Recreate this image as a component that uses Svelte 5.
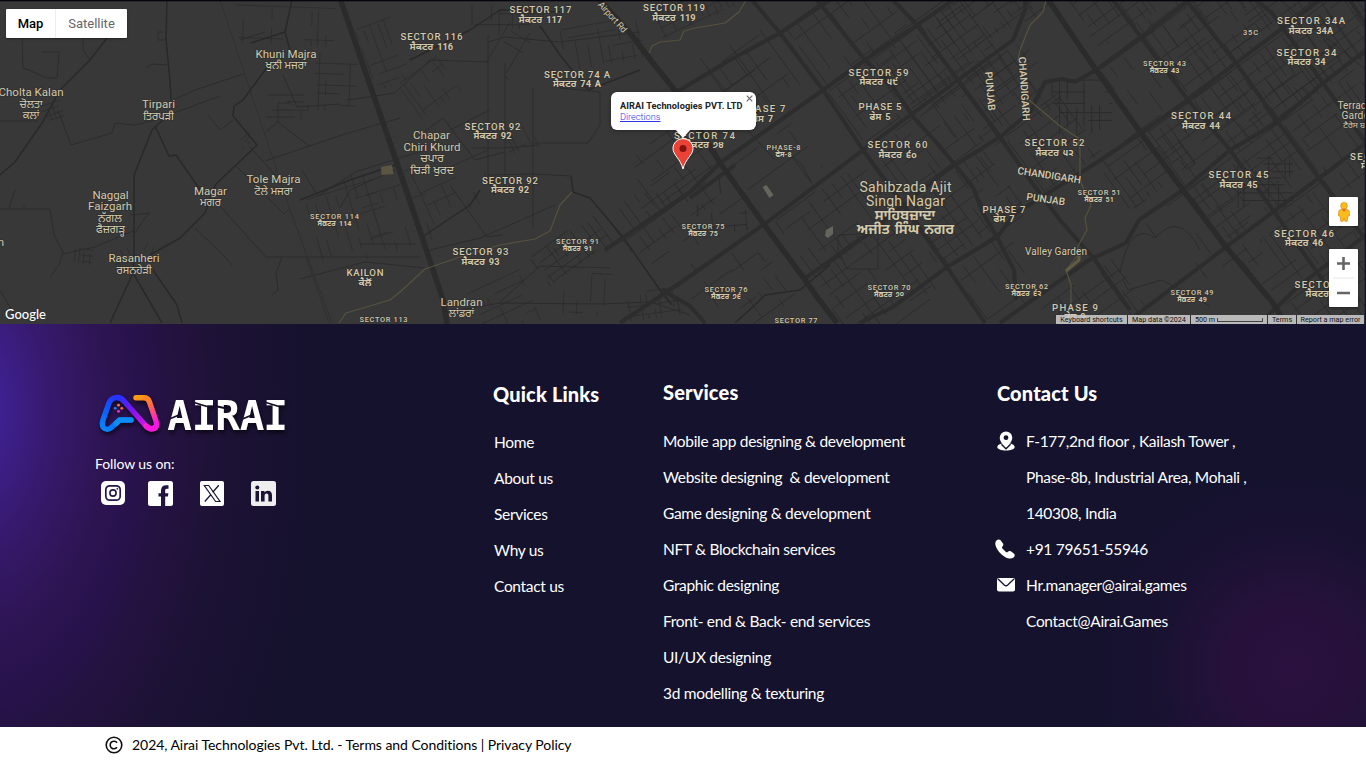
<script>
  // Deterministic generator so the street texture is identical on every load.
  function rng(seed) {
    let s = seed;
    return () => {
      s = (s * 1664525 + 1013904223) % 4294967296;
      return s / 4294967296;
    };
  }

  // Street grid of a district: origin, u axis runs north-east, v axis runs south-east.
  function grid(ox, oy, w, h, seed, angle = -36, step = 13, density = 0.62) {
    const r = rng(seed);
    const a = (angle * Math.PI) / 180;
    const pt = (u, v) => {
      const x = ox + u * Math.cos(a) - v * Math.sin(a);
      const y = oy + u * Math.sin(a) + v * Math.cos(a);
      return `${x.toFixed(1)} ${y.toFixed(1)}`;
    };
    let d = '';
    for (let v = 0; v <= h; v += step * (0.7 + r() * 0.5)) {
      let u = r() * 8;
      while (u < w) {
        const len = 14 + r() * 42;
        if (r() < density) d += `M${pt(u, v)}L${pt(Math.min(w, u + len), v)}`;
        u += len;
      }
    }
    for (let u = 0; u <= w; u += step * (0.5 + r() * 0.55)) {
      let v = r() * 6;
      while (v < h) {
        const len = 8 + r() * 20;
        if (r() < density - 0.08) d += `M${pt(u, v)}L${pt(u, Math.min(h, v + len))}`;
        v += len;
      }
    }
    return d;
  }

  const blocks = [
    grid(690, 85, 85, 60, 3, -36, 22, 0.4), grid(786, 28, 100, 70, 5, -36, 18, 0.5),
    grid(870, 54, 105, 85, 7), grid(925, 25, 100, 50, 9), grid(828, 92, 110, 65, 11),
    grid(867, 152, 115, 90, 13), grid(920, 100, 100, 70, 15), grid(775, 221, 105, 70, 17),
    grid(810, 278, 100, 90, 19), grid(895, 205, 105, 78, 21), grid(965, 80, 70, 75, 23),
    grid(950, 268, 90, 75, 25, -36, 17, 0.5), grid(1005, 137, 70, 70, 27),
    grid(1060, 0, 70, 65, 29), grid(1100, 70, 105, 70, 31, -36, 19, 0.5),
    grid(1145, 37, 112, 75, 33), grid(1120, 0, 90, 40, 35), grid(1193, 99, 112, 70, 37),
    grid(1147, 133, 105, 65, 39), grid(1240, 65, 108, 68, 41), grid(1190, 0, 110, 68, 43),
    grid(1280, 13, 90, 80, 45), grid(1282, 122, 90, 68, 47), grid(1187, 190, 112, 66, 49),
    grid(1232, 247, 110, 66, 51), grid(1322, 178, 70, 70, 53), grid(1145, 222, 90, 85, 55, -36, 23, 0.4),
    grid(1096, 162, 80, 60, 57), grid(1040, 310, 90, 60, 59), grid(1284, 305, 90, 60, 61),
    grid(1052, 80, 60, 55, 62, 0, 10, 0.5), grid(1238, 158, 55, 50, 64, 0, 7, 0.5),
    grid(605, 215, 100, 55, 63, -36, 15, 0.5), grid(650, 265, 115, 60, 65, -36, 24, 0.4),
    grid(625, 162, 70, 60, 67, -36, 14, 0.5), grid(727, 170, 80, 60, 69, -36, 25, 0.25),
    grid(530, 258, 76, 35, 71, -36, 9, 0.7), grid(695, 180, 50, 55, 73, -5, 13, 0.4),
    grid(690, 300, 90, 60, 75, -36, 20, 0.5), grid(975, 0, 70, 50, 72)
  ].join('');

  const villages = [
    grid(235, 5, 100, 38, 81, 2, 12, 0.5), grid(310, 52, 48, 58, 83, 2, 10, 0.5),
    grid(355, 30, 38, 65, 85, -20, 10, 0.5), grid(398, 85, 48, 42, 87, -36, 9, 0.6),
    grid(472, 5, 75, 30, 89, 0, 11, 0.5), grid(560, 30, 80, 42, 91, -10, 13, 0.5),
    grid(305, 200, 70, 62, 93, -17, 12, 0.6), grid(342, 175, 75, 88, 95, -17, 14, 0.45),
    grid(465, 295, 60, 55, 97, -25, 12, 0.5), grid(565, 272, 48, 42, 99, 3, 10, 0.5),
    grid(410, 170, 80, 60, 101, -24, 17, 0.4), grid(485, 65, 50, 28, 103, -60, 8, 0.5),
    grid(105, 252, 27, 20, 105, -25, 8, 0.6), grid(76, 248, 18, 15, 107, 8, 6, 0.6),
    grid(39, 107, 22, 16, 109, -18, 5, 0.6), grid(645, 10, 85, 34, 111, -25, 9, 0.5),
    grid(265, 95, 45, 24, 113, 0, 9, 0.4), grid(495, 130, 38, 30, 115, -26, 8, 0.5),
    grid(147, 238, 12, 12, 117, 25, 5, 0.7), grid(238, 142, 14, 10, 119, -40, 5, 0.7),
    grid(620, 295, 60, 28, 121, -8, 8, 0.5)
  ].join('');

  const tracks = [
    'M58 110L71 145 112 133 115 123 135 125 155 120 220 96', 'M171 101L195 90 243 74',
    'M0 209L50 209 54 235 63 252 59 265 50 277', 'M63 254L95 247 135 230', 'M0 121L38 121',
    'M22 38L23 68 29 70 46 78 57 78 59 52 42 52', 'M163 32H158V40H165M167 65L152 64 146 68',
    'M195 228L225 257 232 265M219 205L266 257H420', 'M265 161L345 134 400 118', 'M250 147L278 178M236 166L284 214 290 208',
    'M208 115L220 130 233 120', 'M267 131L278 122 278 103 291 103M278 122L309 146', 'M283 75L297 107 340 104',
    'M302 170L318 196 355 172 425 150', 'M282 257L276 273 278 290 272 295', 'M488 35V180M505 63V173M533 88V228M488 42L505 37 560 42 640 32',
    'M533 143H588L600 125 600 92 560 88', 'M472 148L505 148 540 145M488 175L534 174 571 176', 'M430 250L480 238 510 225 555 205',
    'M500 302L540 266 610 268', 'M447 312L500 303 600 304 650 302 690 315', 'M300 279L365 262 425 268', 'M347 100L395 93 430 60 488 62',
    'M443 118L475 160 505 152M443 118L420 135M450 185L487 237 502 235', 'M0 290L14 314M15 190L9 208M24 205V209', 'M130 215L150 213M134 234L148 214',
    'M1120 273Q1130 220 1155 238 1180 210 1200 250M1123 280L1128 290 1162 280 1210 306', 'M1280 0L1366 70',
    'M838 235L878 233V269H847L838 250Z', 'M340 208L350 190 395 170M450 130L490 110M360 244H416M240 40L265 32M83 35V50L90 60',
    'M700 58L740 110M730 45L775 110M760 30L800 85M705 105L755 70', 'M785 150L802 165 812 183M738 120L775 160'
  ].join('');

  const lanes = [
    'M167 0L166 40 170 80 171 100', 'M165 118L152 130 134 175 134 258 133 273 110 323M133 273L162 323',
    'M155 126L169 156 176 155 203 194', 'M107 38L90 60 60 90 42 123 15 162 0 175', 'M292 0L285 32 251 43M285 32L290 50',
    'M268 66L243 100 234 106 233 116 257 145 215 185 205 213 180 238 150 255', 'M153 270L177 305 182 323',
    'M540 26L560 55 588 90 640 70', 'M571 176L573 192 590 198 623 237 660 290 672 305',
    'M410 60L470 30 500 10 560 12', 'M395 165L350 180 300 200M422 237L470 205 480 190', 'M735 323L755 305 765 295 800 290 830 265'
  ].join('');

  const arterials = [
    'M752 0L780 33 823 90 863 150 887 183 947 267 985 323', 'M817 0L865 60 893 87 913 117 937 143 973 187 983 213 997 237 1014 270 1016 300',
    'M893 0L917 25 958 80 1000 137 1030 180 1060 220 1095 260 1130 310', 'M1113 0L1141 37 1188 100 1230 150 1280 220 1330 290',
    'M1186 0L1236 63 1278 122 1319 178 1366 240', 'M1256 0L1272 13 1323 83 1366 143', 'M1350 0L1366 25',
    'M660 102L730 60 780 33 830 0', 'M605 250L690 192 720 163 823 90 865 60 917 25 953 0', 'M620 323L680 283 770 220 863 150 958 80 1013 40 1025 10 1025 0',
    'M803 280L870 232 947 170 1000 137 1030 112 1045 82 1062 79 1075 82 1096 70 1141 37 1190 0',
    'M860 323L893 307 947 267 997 237 1016 213 1096 163 1141 133 1188 100 1236 63 1320 0',
    'M1000 323L1089 260 1126 243 1139 220 1183 190 1230 150 1278 122 1323 83 1366 50', 'M1130 320L1226 247 1319 178 1366 143', 'M1260 323L1300 285 1366 235',
    'M690 198L735 165M662 290L690 306 705 323'
  ].join('');

  const trunks = ['M338 -8L343 7 397 163 422 237 443 300 447 324', 'M1047 -2L1096 70 1141 133 1183 190 1226 247 1273 303 1285 323',
    'M586 -15L630 33 653 63 677 93 720 163 763 223 803 277 817 297 837 323'].join('');

  // x, y, size, width, name, local script lines
  const towns = [
    [31, 96, 11.5, 65, 'Cholta Kalan', ['ਚੋਲਤਾ', 'ਕਲਾਂ']],
    [158.5, 108, 11.5, 33, 'Tirpari', ['ਤਿਰਪੜੀ']],
    [286, 57.5, 11.5, 61, 'Khuni Majra', ['ਖੁਨੀ ਮਜਰਾ']],
    [273.5, 183, 11.5, 54, 'Tole Majra', ['ਟੋਲੇ ਮਜਰਾ']],
    [210.5, 194.5, 11.5, 33, 'Magar', ['ਮਗਰ']],
    [134, 262, 11.5, 51, 'Rasanheri', ['ਰਸਨਹੇੜੀ']],
    [461.5, 305.5, 11.5, 42, 'Landran', ['ਲਾਂਡਰਾਂ']]
  ];

  const sectors = [
    [431.5, 40, 62, 'SECTOR 116', 'ਸੈਕਟਰ 116'], [540.5, 13, 62, 'SECTOR 117', 'ਸੈਕਟਰ 117'], [674, 11, 62, 'SECTOR 119', 'ਸੈਕਟਰ 119'],
    [577, 77.5, 66, 'SECTOR 74 A', 'ਸੈਕਟਰ 74 A'], [492.5, 129.5, 56, 'SECTOR 92', 'ਸੈਕਟਰ 92'], [510, 183.5, 56, 'SECTOR 92', 'ਸੈਕਟਰ 92'],
    [480.5, 255, 56, 'SECTOR 93', 'ਸੈਕਟਰ 93'], [365, 276, 37, 'KAILON', 'ਕੈਲੋਂ'], [704.5, 138.5, 61, 'SECTOR 74', 'ਸੈਕਟਰ ੭੪'],
    [762.5, 112, 46, 'PHASE 7', 'ਫੇਸ 7'], [878.5, 75.5, 60, 'SECTOR 59', 'ਸੈਕਟਰ ੫੯'], [880, 110, 43, 'PHASE 5', 'ਫੇਸ 5'],
    [897.5, 148, 60, 'SECTOR 60', 'ਸੈਕਟਰ ੬੦'], [1004, 212.5, 43, 'PHASE 7', 'ਫੇਸ 7'], [1054.5, 146, 60, 'SECTOR 52', 'ਸੈਕਟਰ ੫੨'],
    [1201, 119, 60, 'SECTOR 44', 'ਸੈਕਟਰ 44'], [1238.5, 178, 60, 'SECTOR 45', 'ਸੈਕਟਰ 45'], [1304, 236.5, 60, 'SECTOR 46', 'ਸੈਕਟਰ 46'],
    [1311, 24, 68, 'SECTOR 34A', 'ਸੈਕਟਰ 34A'], [1306.5, 55.5, 60, 'SECTOR 34', 'ਸੈਕਟਰ 34'], [1324.5, 287.5, 60, 'SECTOR 47', 'ਸੈਕਟਰ 47'],
    [1380, 159.5, 60, 'SECTOR 33', 'ਸੈਕਟਰ 33'], [1075, 310.5, 46, 'PHASE 9', 'ਫੇਸ 9']
  ];

  const minor = [
    [334.5, 218.5, 49, 'SECTOR 114', 'ਸੈਕਟਰ 114'], [577.5, 243.5, 43, 'SECTOR 91', 'ਸੈਕਟਰ 91'], [383.5, 322, 48, 'SECTOR 113', ''],
    [703, 229, 43, 'SECTOR 75', 'ਸੈਕਟਰ 75'], [783.5, 149.5, 34, 'PHASE-8', 'ਫੇਸ-8'], [726, 292, 43, 'SECTOR 76', 'ਸੈਕਟਰ ੭੬'],
    [796, 323.3, 43, 'SECTOR 77', ''], [889, 290, 43, 'SECTOR 70', 'ਸੈਕਟਰ ੭੦'], [1026.5, 289, 43, 'SECTOR 62', 'ਸੈਕਟਰ ੬੨'],
    [1164.5, 66, 43, 'SECTOR 43', 'ਸੈਕਟਰ 43'], [1099, 194.5, 43, 'SECTOR 51', 'ਸੈਕਟਰ 51'], [1192, 294.5, 43, 'SECTOR 49', 'ਸੈਕਟਰ 49'],
    [1250.5, 35, 15, '35C', '']
  ];

  const links = ['Home', 'About us', 'Services', 'Why us', 'Contact us'];
  const services = [
    'Mobile app designing & development', 'Website designing\u00a0 & development', 'Game designing & development',
    'NFT & Blockchain services', 'Graphic designing', 'Front- end & Back- end services', 'UI/UX designing', '3d modelling & texturing'
  ];
  const contact = [
    ['pin', 'F-177,2nd floor , Kailash Tower ,'], ['', 'Phase-8b, Industrial Area, Mohali ,'], ['', '140308, India'],
    ['phone', '+91 79651-55946'], ['mail', 'Hr.manager@airai.games'], ['', 'Contact@Airai.Games']
  ];
</script>

<main>
  <section class="map">
    <svg class="canvas" width="1366" height="324" viewBox="0 0 1366 324">
      <rect width="1366" height="324" fill="#383838" />
      <g fill="none" stroke-linejoin="round">
        <path d={villages} stroke="#2c2c2c" stroke-width=".8" />
        <path d={blocks} stroke="#2a2a2a" stroke-width=".9" />
        <path d={tracks} stroke="#2c2c2c" stroke-width="1" />
        <path d="M220 0L250 90 290 210 332 323M306 257L329 323" stroke="#303030" stroke-width="1" />
        <path d={lanes} stroke="#292929" stroke-width="1.500" />
        <path d={arterials} stroke="#2d2d2d" stroke-width="4" />
        <path d={trunks} stroke="#2b2b2b" stroke-width="5.500" />
        <g stroke="#56523f" stroke-width="1.200">
          <path d="M339 323L346 313 390 300 400 292 425 269 460 257 500 245 535 239 550 231 560 205 572 192" />
          <path d="M649 53L652 46 660 42 680 40 684 31 695 28 725 23 739 12 746 0" />
          <path d="M1046 0L1043 12 1030 25 1020 50 1018 60M1028 99L1035 105 1060 126 1078 138 1080 150V180L1084 190 1091 205 1085 218 1087 230 1078 246 1078 255 1066 270 1071 285V305" />
        </g>
        <path d="M1079 255V260L1066 271" stroke="#605b44" stroke-width="3" />
      </g>
      <path d="M381 167l11-2 1.500 9-12 1z" fill="#5b5642" />
      <g fill="#66655d">
        <path d="M762.500 187l4-2 7 10-4 3z" /><path d="M826 230l7-4v8l-5 4-3-2z" />
      </g>
      <g class="labels" text-anchor="middle">
        {#each towns as [x, y, size, w, name, local]}
          <text {x} {y} font-size={size} textLength={w}>{name}</text>
          {#each local as line, i}<text {x} y={y + 11.5 * (i + 1)} font-size="10.900">{line}</text>{/each}
        {/each}
        <text x="110.500" y="198.500" font-size="11.500" textLength="36">Naggal</text>
        <text x="110" y="210" font-size="11.500" textLength="44">Faizgarh</text>
        <text x="110" y="221.500" font-size="11.500">ਨੱਗਲ</text>
        <text x="110.500" y="233" font-size="11.500">ਫੈਜ਼ਗੜ੍ਹ</text>
        <text x="431.500" y="139" font-size="11.500" textLength="37">Chapar</text>
        <text x="432" y="150.500" font-size="11.500" textLength="57">Chiri Khurd</text>
        <text x="432" y="162" font-size="11.500">ਚਪਾਰ</text>
        <text x="432" y="173.500" font-size="11.500">ਚਿੜੀ ਖੁਰਦ</text>
        <text x="1" y="246" font-size="11.500">n</text>
        {#each sectors as [x, y, w, name, local]}
          <text class="med" {x} {y} font-size="9.600" textLength={w}>{name}</text>
          <text class="bold" {x} y={y + 9.7} font-size="9.300">{local}</text>
        {/each}
        {#each minor as [x, y, w, name, local]}
          <text class="med" {x} {y} font-size="7.400" textLength={w}>{name}</text>
          <text class="bold" {x} y={y + 7.2} font-size="7.200">{local}</text>
        {/each}
        <g font-size="14" class="city">
          <text x="905.500" y="191.500" textLength="92">Sahibzada Ajit</text>
          <text x="905.500" y="206" textLength="79">Singh Nagar</text>
          <text class="bold" x="905" y="220" font-size="14">ਸਾਹਿਬਜ਼ਾਦਾ</text>
          <text class="bold" x="905.500" y="234" font-size="14">ਅਜੀਤ ਸਿੰਘ ਨਗਰ</text>
        </g>
        <text x="1056" y="255" font-size="10" textLength="62">Valley Garden</text>
        <g text-anchor="start" font-size="10.200">
          <text x="1337.500" y="109" textLength="34">Terrace</text>
          <text x="1341.500" y="119" textLength="33">Garden</text>
          <text x="1343" y="128" font-size="8.500">ਟੈਰੇਸ ਬਾਗ</text>
          <text x="597.500" y="5" font-size="9.200" textLength="38" transform="rotate(48 597.5 5)">Airport Rd</text>
          <g class="med">
            <text x="985" y="72" textLength="39" transform="rotate(85 985 72)">PUNJAB</text>
            <text x="1018.500" y="57" textLength="64" transform="rotate(86 1018.5 57)">CHANDIGARH</text>
            <text x="1017" y="174" textLength="64" transform="rotate(8.500 1017 174)">CHANDIGARH</text>
            <text x="1026" y="200" textLength="39" transform="rotate(8 1026 200)">PUNJAB</text>
          </g>
        </g>
      </g>
      <text class="google" x="5" y="319" textLength="41">Google</text>
      <rect width="1366" height="1.300" fill="#050510" />
      <rect x="1364.700" width="1.300" height="324" fill="#14122d" />
    </svg>

    <div class="types"><b>Map</b><span>Satellite</span></div>

    <div class="bubble">
      <strong>AIRAI Technologies PVT. LTD</strong>
      <u>Directions</u>
      <svg class="close" width="7" height="7" viewBox="0 0 7 7"><path d="M.7.7l5.600 5.600M6.300.7L.7 6.300" stroke="#666" stroke-width="1.100" /></svg>
    </div>
    <svg class="marker" width="22" height="32" viewBox="0 0 22 32">
      <path d="M11 .7C5.400.7 1 5 1 10.500c0 6.500 7.400 10 10 20.500 2.600-10.500 10-14 10-20.500C21 5 16.600.7 11 .7z" fill="#ea4335" stroke="#fff" stroke-width="1" />
      <circle cx="11" cy="10.400" r="3.500" fill="#811411" />
    </svg>

    <div class="control pegman">
      <svg width="12" height="22" viewBox="0 0 14 24">
        <path d="M3.500 9h7l2.500 1.500.4 5.800-2 .9-.6 5.600H8l-1-4-1 4H3.200l-.6-5.600-2-.9L1 10.500z" fill="#fbbc1c" stroke="#d58a12" stroke-width=".8" />
        <circle cx="7" cy="4.800" r="3.900" fill="#fbbc1c" stroke="#d58a12" stroke-width=".8" />
        <path d="M4 8.600h6L7 12z" fill="#e8701a" />
      </svg>
    </div>
    <div class="control zoom">
      <svg width="29" height="58" viewBox="0 0 29 58"><path d="M14.500 8v13M8 14.500h13M8 44h13" stroke="#666" stroke-width="2.600" /><path d="M4 29h21" stroke="#e6e6e6" /></svg>
    </div>
    <div class="credits">
      <span>Keyboard shortcuts</span><span>Map data ©2024</span><span class="scale">500 m <i></i></span><span>Terms</span><span>Report a map error</span>
    </div>
  </section>

  <footer>
    <div class="brand">
      <svg class="logo" width="196" height="46" viewBox="0 0 196 46">
        <defs>
          <linearGradient id="left" x1="0" y1="1" x2=".7" y2="0"><stop offset="0" stop-color="#0787f8" /><stop offset=".55" stop-color="#0a58ff" /><stop offset="1" stop-color="#3526f2" /></linearGradient>
          <linearGradient id="diag" x1="0" y1="0" x2="1" y2="1"><stop offset="0" stop-color="#2433ff" /><stop offset=".4" stop-color="#7d14ef" /><stop offset="1" stop-color="#fb14e9" /></linearGradient>
          <linearGradient id="right" x1="0" y1="0" x2=".4" y2="1"><stop offset="0" stop-color="#ff9c10" /><stop offset=".45" stop-color="#ff6a48" /><stop offset="1" stop-color="#fc17df" /></linearGradient>
          <mask id="cuts">
            <rect width="196" height="46" fill="#fff" />
            <path d="M69 27l12-5M142 27l12-5M96 9.500l13 4M168 9.500l13 4M117 13l14 3" fill="none" stroke="#000" stroke-width="1.800" />
          </mask>
        </defs>
        <g fill="none" stroke-width="5.400" stroke-linecap="round" stroke-linejoin="round">
          <path d="M33 27H21.500L14 34Q9 38.500 5.500 34.500 3.500 32 5 27L11 10Q13.500 4.500 19 4.500 22.500 4.500 25.500 7.500" stroke="url(#left)" />
          <path d="M33 27H21.500L18 30.500" stroke="#0b8df2" />
          <path d="M20 4.500Q23.500 5 26 8L48 33Q53 37.800 56.500 34.500" stroke="url(#diag)" />
          <path d="M38 4.800H46Q50 4.800 51.500 9L58 28Q60 35 55 35.600 51 36 48 33" stroke="url(#right)" />
        </g>
        <circle cx="20.500" cy="12.200" r="1.400" fill="#ff7a2a" /><circle cx="17.200" cy="15.300" r="1.400" fill="#2a7bea" /><circle cx="23.800" cy="15.300" r="1.400" fill="#ff6a40" /><circle cx="20.500" cy="18.300" r="1.500" fill="#e42dd8" />
        <text class="word" y="36.500" text-anchor="middle" mask="url(#cuts)"><tspan x="81.500">A</tspan><tspan x="106">I</tspan><tspan x="129.500">R</tspan><tspan x="154">A</tspan><tspan x="177.500">I</tspan></text>
      </svg>
      <p>Follow us on:</p>
      <div class="social">
        <svg width="24" height="24" viewBox="0 0 24 24"><rect width="24" height="24" rx="5" fill="#fff" /><rect x="4.800" y="4.800" width="14.400" height="14.400" rx="4" fill="none" stroke="#25154a" stroke-width="1.700" /><circle cx="12" cy="12" r="3.100" fill="none" stroke="#25154a" stroke-width="1.600" /><circle cx="16.300" cy="7.800" r=".9" fill="#25154a" /></svg>
        <svg width="25" height="25" viewBox="0 0 25 25"><rect width="25" height="25" rx="2.500" fill="#fff" /><path d="M13 25v-9.500h-2.500v-3.300H13V9.500C13 6 15 4.200 18 4.200h2.500v3.600h-1.600c-1.300 0-1.700.7-1.700 1.800v2.600h3.200l-.5 3.300h-2.700V25z" fill="#21163f" /></svg>
        <svg width="24" height="25" viewBox="0 0 24 25"><rect width="24" height="25" rx="2" fill="#fff" /><path d="M4.300 4.500h4.400L20 20.500h-4.400z" fill="none" stroke="#1d1436" stroke-width="1.200" /><path d="M18.800 4.200l-6.100 7M11 13.500l-6.200 7" stroke="#1d1436" stroke-width="1.300" /></svg>
        <svg width="25" height="25" viewBox="0 0 25 25"><rect width="25" height="25" rx="2.500" fill="#eee" /><circle cx="6.300" cy="6.600" r="2" fill="#1b1435" /><path d="M4.500 10H8v10.500H4.500zM10 10h3.400v1.500c.7-1.100 1.900-1.800 3.400-1.800 3 0 4.200 2 4.200 4.700v6.100h-3.600v-5.600c0-1.300-.3-2.300-1.700-2.300-1.500 0-2.100 1.100-2.100 2.400v5.500H10z" fill="#1b1435" /></svg>
      </div>
    </div>

    <nav class="col quick">
      <h3>Quick Links</h3>
      <ul>{#each links as item}<li>{item}</li>{/each}</ul>
    </nav>
    <div class="col services">
      <h3>Services</h3>
      <ul>{#each services as item}<li>{item}</li>{/each}</ul>
    </div>
    <div class="col contact">
      <h3>Contact Us</h3>
      <ul>
        {#each contact as [icon, line]}
          <li>
            <span class="ico {icon}">
              {#if icon === 'pin'}
                <svg width="18" height="20" viewBox="0 0 18 20"><path d="M4.500 12.500C1.700 13.300.3 14.600.3 16c0 2 3.800 3.500 8.700 3.500s8.700-1.500 8.700-3.500c0-1.400-1.400-2.700-4.200-3.500L9 18z" fill="#fff" /><path d="M9 .4a6.300 6.300 0 0 0-6.300 6.300C2.700 11 9 17 9 17s6.300-6 6.300-10.300A6.300 6.300 0 0 0 9 .4z" fill="#fff" /><circle cx="9" cy="6.700" r="2.400" fill="#14122d" /><path d="M4.300 13.300L9 18l4.700-4.700" fill="none" stroke="#14122d" stroke-width="1.200" /></svg>
              {:else if icon === 'phone'}
                <svg width="20" height="20" viewBox="0 0 20 20"><path d="M1.200 1.700C2.700.1 4.600 0 5.600 1.200L8 4.500c.7 1.100.3 2-.5 2.900-.7.700-.7 1.400-.1 2.100l3.300 3.300c.8.700 1.500.7 2.200 0 .8-.8 1.800-1.200 2.900-.5l3 2.200c1.400 1 1.200 2.600-.3 4-1.900 1.700-5.300 1.300-8.500-.6C6 15.500 3.500 12.600 1.700 9.200.3 6.500-.4 3.500 1.200 1.700z" fill="#fff" /></svg>
              {:else if icon === 'mail'}
                <svg width="18" height="14" viewBox="0 0 18 14"><rect width="18" height="13.500" rx="2" fill="#fff" /><path d="M1 1l6.300 6q1.700 1.500 3.400 0L17 1" fill="none" stroke="#14122d" stroke-width="1.300" /></svg>
              {/if}
            </span>{line}
          </li>
        {/each}
      </ul>
    </div>
  </footer>

  <div class="legal">
    <svg width="18" height="18" viewBox="0 0 18 18" fill="none" stroke="#111" stroke-width="1.600"><circle cx="9" cy="9" r="7.800" /><path d="M12 6.700A3.800 3.800 0 1 0 12 11.300" /></svg>
    <span>2024, Airai Technologies Pvt. Ltd. - Terms and Conditions | Privacy Policy</span>
  </div>
</main>

<style>
  :global(body) { margin: 0; background: #fff; overflow: hidden; }
  main { width: 1366px; height: 768px; display: flex; flex-direction: column; font-family: Lato, sans-serif; }
  .map { position: relative; height: 324px; font-family: Roboto, "Liberation Sans", sans-serif; overflow: hidden; }
  .canvas { display: block; }
  .labels { fill: #d3c9ac; font-family: Roboto, "Noto Sans Gurmukhi", "Noto Sans", sans-serif; paint-order: stroke; stroke: #303030; stroke-width: 1.500px; stroke-linejoin: round; }
  .med { font-weight: 500; }
  .bold { font-weight: 700; word-spacing: 1.500px; }
  .google { fill: #fff; font-size: 13px; font-weight: 500; paint-order: stroke; stroke: #333; stroke-width: 1px; font-family: Lato, sans-serif; }
  .types { position: absolute; left: 6px; top: 9px; height: 29px; width: 121px; display: flex; align-items: center; background: #fff; border-radius: 1px; font-size: 13px; box-shadow: 0 1px 2px #0006; }
  .types b { width: 49px; text-align: center; font-weight: 500; color: #000; line-height: 29px; border-right: 1px solid #eee; }
  .types span { flex: 1; text-align: center; color: #666; }
  .bubble { position: absolute; left: 611px; top: 92px; width: 145px; height: 38px; box-sizing: border-box; padding: 9px; background: #fff; border-radius: 6px; display: flex; flex-direction: column; box-shadow: 0 1px 4px #0005; font-family: Roboto, sans-serif; }
  .bubble::after { content: ''; position: absolute; left: 64px; top: 37px; border: 8px solid transparent; border-top: 9px solid #fff; border-bottom: 0; }
  .bubble strong { font: 700 9.200px/10px Roboto, sans-serif; letter-spacing: .08px; color: #222; white-space: nowrap; }
  .bubble u { font: 300 9.200px/12px Roboto, sans-serif; color: #3434e8; }
  .close { position: absolute; right: 3px; top: 3px; }
  .marker { position: absolute; left: 672px; top: 138px; }
  .control { position: absolute; left: 1329px; width: 29px; background: #fff; border-radius: 1px; box-shadow: 0 1px 3px #0006; }
  .pegman { top: 197px; height: 29px; display: flex; align-items: center; justify-content: center; }
  .zoom { top: 249px; height: 58px; }
  .credits { position: absolute; left: 1056px; top: 315px; width: 308px; height: 9px; display: flex; background: #c8c8c8e6; color: #111; font: 7.200px/9px Roboto, sans-serif; white-space: nowrap; }
  .credits span { box-sizing: border-box; text-align: center; border-right: 1px solid #333; }
  .credits span:nth-child(1) { width: 72px; }
  .credits span:nth-child(2) { width: 63px; }
  .credits .scale { width: 77px; display: flex; justify-content: center; gap: 2px; }
  .scale i { width: 44px; height: 3px; margin-top: 3px; border: 1px solid #444; border-top: 0; }
  .credits span:nth-child(4) { width: 29px; }
  .credits span:nth-child(5) { flex: 1; border: 0; }

  footer {
    height: 403px; box-sizing: border-box; padding: 55px 0 0 95px; color: #fff;
    display: grid; grid-template-columns: 398px 170px 334px 1fr;
    background:
      radial-gradient(circle 215px at 1292px 345px, #2b113f 0%, #26113b 30%, #1b1233aa 65%, #14122d00 100%),
      radial-gradient(ellipse 450px 765px at -30px 85px, #432297 0%, #3e208f 7%, #371a70 17%, #2e1555 29%, #27124a 39%, #241240 45%, #1c1234 58%, #16122e 75%, #14122d 100%),
      #14122d;
  }
  .brand { display: flex; flex-direction: column; align-items: flex-start; padding-top: 14px; }
  .logo { display: block; margin-left: 3px; filter: drop-shadow(1px 3px 2px #0009); }
  .word { font: 700 41px "DejaVu Sans Mono", monospace; fill: #fff; }
  .brand p { margin: 16px 0 0; font-size: 14px; letter-spacing: -.1px; line-height: 18px; height: 18px; }
  .social { display: flex; align-items: flex-start; margin: 8px 0 0 6px; }
  .social svg:nth-child(2) { margin-left: 23px; }
  .social svg:nth-child(3) { margin-left: 27px; }
  .social svg:nth-child(4) { margin-left: 27px; }
  h3 { margin: 0; font-size: 20px; letter-spacing: .15px; line-height: 28px; font-weight: 900; }
  ul { list-style: none; margin: 16px 0 0; padding: 0; }
  li { height: 36px; line-height: 36px; font-size: 15.500px; letter-spacing: -.31px; white-space: nowrap; }
  .quick h3 { padding-top: 1px; }
  .quick ul { padding-left: 1px; }
  .services h3 { margin-top: -1px; }
  .services ul { margin-top: 17px; }
  .contact li { display: flex; align-items: center; }
  .ico { width: 29px; display: flex; }
  .ico.phone { margin-left: -2px; width: 31px; }
  .legal { flex: 1; display: flex; align-items: center; padding: 0 0 6px 105px; background: #fff; color: #000; font-size: 14px; letter-spacing: -.05px; }
  .legal span { margin-left: 9px; }
</style>
